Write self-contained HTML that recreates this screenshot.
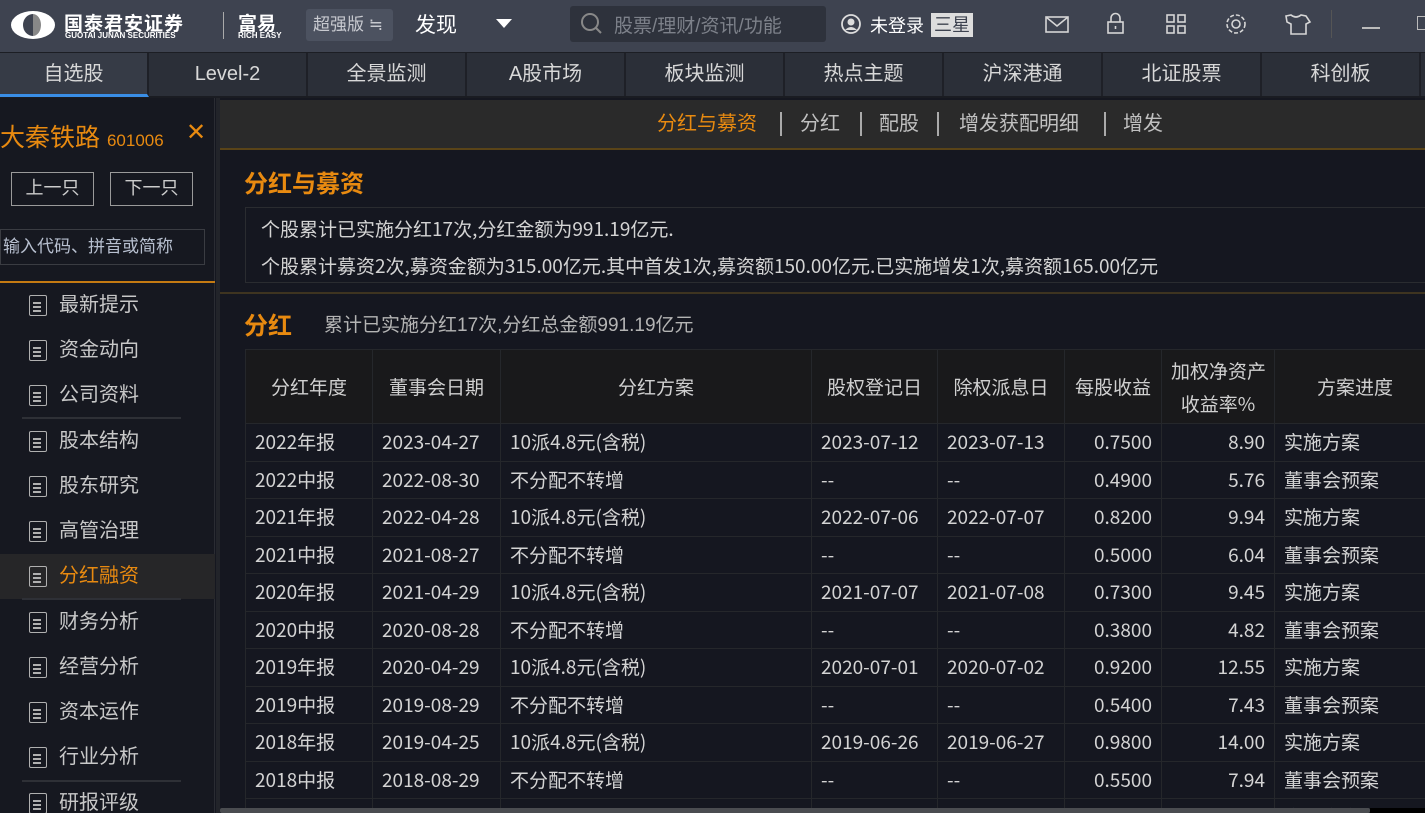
<!DOCTYPE html>
<html><head><meta charset="utf-8"><style>
*{margin:0;padding:0;box-sizing:border-box}
body{width:1425px;height:813px;overflow:hidden;background:#151720;font-family:"Liberation Sans","Noto Sans CJK SC",sans-serif;color:#d2d2d2;position:relative}
.abs{position:absolute}
#top{left:0;top:0;width:1425px;height:52px;background:#3e4350}
#tabs{left:0;top:52px;width:1425px;height:46px;background:#2b2f38;border-top:1px solid #1c1e24;border-bottom:2px solid #1a1c22}
.tab{position:absolute;top:0;height:43px;line-height:43px;text-align:center;font-size:20px;color:#d8d8d8;border-right:2px solid #1e2027}
#left{left:0;top:98px;width:215px;height:715px;background:#161820;border-right:1px solid #2a2c33}
.mi{position:absolute;left:0;width:215px;height:45px;line-height:45px;font-size:20px;color:#c8c8c8;padding-left:59px}
.ic{position:absolute;left:29px;top:12px;width:18px;height:21px;border:1.5px solid #b0b0b0;border-radius:2px}
.ic i{position:absolute;left:3px;height:1.5px;width:8px;background:#b0b0b0}
.sep{position:absolute;left:22px;width:159px;height:2px;background:#2e3036}
table{border-collapse:collapse;position:absolute;left:245px;top:349px;font-size:19px;table-layout:fixed;width:1190px;font-family:"Noto Sans CJK SC","Liberation Sans",sans-serif}
td{border:1px solid #25272b;height:37.5px;line-height:20px;padding:0 9px;white-space:nowrap;color:#d4d4d4;overflow:hidden}
tr.h td{height:74px;background:#19191b;text-align:center;color:#d0d0d0;font-size:19px}
td.r{text-align:right}
</style></head><body>
<div id="top" class="abs">
 <svg class="abs" style="left:10px;top:10px" width="46" height="30"><ellipse cx="23" cy="15" rx="22" ry="14" fill="#fff"/><path d="M23 4 A10 11 0 0 0 23 26 Z" fill="#3e4350"/><path d="M23 4 A8 11 0 0 1 23 26 Z" fill="#888"/></svg>
 <div class="abs" style="left:64px;top:9px;font-size:19px;color:#fff;font-weight:bold;letter-spacing:1px">国泰君安证券</div>
 <div class="abs" style="left:65px;top:31px;font-size:8px;color:#fff;font-weight:bold">GUOTAI JUNAN SECURITIES</div>
 <div class="abs" style="left:223px;top:12px;width:1px;height:27px;background:#aaa"></div>
 <div class="abs" style="left:238px;top:9px;font-size:19px;color:#fff;font-weight:bold">富易</div>
 <div class="abs" style="left:238px;top:31px;font-size:8px;color:#fff;font-weight:bold">RICH EASY</div>
 <div class="abs" style="left:306px;top:9px;width:87px;height:32px;background:#4c5260;border-radius:3px;font-size:17px;line-height:32px;color:#c8cad0;padding-left:7px">超强版 ≒</div>
 <div class="abs" style="left:415px;top:9px;font-size:21px;color:#fff">发现</div>
 <div class="abs" style="left:496px;top:19px;width:0;height:0;border-left:8px solid transparent;border-right:8px solid transparent;border-top:9px solid #fff"></div>
 <div class="abs" style="left:570px;top:6px;width:256px;height:36px;background:#2e323c;border-radius:3px"></div>
 <svg class="abs" style="left:580px;top:12px" width="24" height="24"><circle cx="10" cy="10" r="8" fill="none" stroke="#888" stroke-width="2"/><path d="M16 16 L21 21" stroke="#888" stroke-width="2"/></svg>
 <div class="abs" style="left:614px;top:11px;font-size:19px;color:#7d818a">股票/理财/资讯/功能</div>
 <svg class="abs" style="left:840px;top:13px" width="22" height="22"><circle cx="11" cy="11" r="9" fill="none" stroke="#ddd" stroke-width="1.8"/><circle cx="11" cy="9" r="3.5" fill="#ddd"/><path d="M5 17 Q11 11 17 17" fill="#ddd"/></svg>
 <div class="abs" style="left:870px;top:12px;font-size:18px;color:#fff">未登录</div>
 <div class="abs" style="left:931px;top:13px;width:42px;height:24px;background:#ddd;color:#3e4350;font-size:18px;line-height:24px;text-align:center">三星</div>
 <svg class="abs" style="left:1040px;top:10px" width="280" height="30" fill="none" stroke="#d6d6d6" stroke-width="1.6">
  <rect x="6" y="7" width="22" height="15"/><path d="M6 7 L17 16 L28 7"/>
  <rect x="68" y="12" width="15" height="11"/><path d="M71 12 V8 A4.5 4.5 0 0 1 80 8 V12"/><path d="M75.5 16 V19"/>
  <rect x="127" y="5" width="7" height="7"/><rect x="138" y="5" width="7" height="7"/><rect x="127" y="16" width="7" height="7"/><rect x="138" y="16" width="7" height="7"/>
  <circle cx="196" cy="14" r="4"/><circle cx="196" cy="14" r="9" stroke-dasharray="4 2"/>
  <path d="M246 6 L251 5 Q256 9 261 5 L266 6 L270 12 L266 14 V24 H251 V14 L247 12 Z"/>
 </svg>
 <div class="abs" style="left:1331px;top:10px;width:1px;height:28px;background:#555"></div>
 <div class="abs" style="left:1362px;top:27px;width:18px;height:2px;background:#bbb"></div>
 <div class="abs" style="left:1417px;top:16px;width:10px;height:14px;border:1.5px solid #bbb"></div>
</div>
<div id="tabs" class="abs">
 <div class="tab" style="left:0;width:149px;background:#363b46;border-bottom:3px solid #3a8ee6;height:44px">自选股</div>
 <div class="tab" style="left:149px;width:159px">Level-2</div>
 <div class="tab" style="left:308px;width:159px">全景监测</div>
 <div class="tab" style="left:467px;width:159px">A股市场</div>
 <div class="tab" style="left:626px;width:159px">板块监测</div>
 <div class="tab" style="left:785px;width:159px">热点主题</div>
 <div class="tab" style="left:944px;width:159px">沪深港通</div>
 <div class="tab" style="left:1103px;width:159px">北证股票</div>
 <div class="tab" style="left:1262px;width:159px">科创板</div>
</div>
<div id="left" class="abs">
 <div class="abs" style="left:0;top:20px;font-size:25px;color:#e88a10">大秦铁路 <span style="font-size:17px">601006</span></div>
 <div class="abs" style="left:186px;top:20px;font-size:24px;color:#e88a10">✕</div>
 <div class="abs" style="left:11px;top:74px;width:83px;height:34px;border:1.5px solid #9a9a9a;text-align:center;line-height:31px;font-size:18px;color:#ccc">上一只</div>
 <div class="abs" style="left:110px;top:74px;width:83px;height:34px;border:1.5px solid #9a9a9a;text-align:center;line-height:31px;font-size:18px;color:#ccc">下一只</div>
 <div class="abs" style="left:0;top:131px;width:205px;height:36px;border:1px solid #3a3c42;font-size:17px;line-height:34px;color:#b8c0d0;padding-left:2px">输入代码、拼音或简称</div>
 <div class="abs" style="left:0;top:183px;width:215px;height:2px;background:#c47a12"></div>
</div>
<div class="abs" style="left:0;top:283px;width:215px;height:530px;overflow:hidden">
 <div class="mi" style="top:0px"><div class="ic"><i style="top:6px"></i><i style="top:10px"></i><i style="top:14px"></i></div>最新提示</div>
 <div class="mi" style="top:45px"><div class="ic"><i style="top:6px"></i><i style="top:10px"></i><i style="top:14px"></i></div>资金动向</div>
 <div class="mi" style="top:90px"><div class="ic"><i style="top:6px"></i><i style="top:10px"></i><i style="top:14px"></i></div>公司资料</div>
 <div class="mi" style="top:136px"><div class="ic"><i style="top:6px"></i><i style="top:10px"></i><i style="top:14px"></i></div>股本结构</div>
 <div class="mi" style="top:181px"><div class="ic"><i style="top:6px"></i><i style="top:10px"></i><i style="top:14px"></i></div>股东研究</div>
 <div class="mi" style="top:226px"><div class="ic"><i style="top:6px"></i><i style="top:10px"></i><i style="top:14px"></i></div>高管治理</div>
 <div class="mi" style="top:271px;background:#262628;color:#e88a10"><div class="ic"><i style="top:6px"></i><i style="top:10px"></i><i style="top:14px"></i></div>分红融资</div>
 <div class="mi" style="top:317px"><div class="ic"><i style="top:6px"></i><i style="top:10px"></i><i style="top:14px"></i></div>财务分析</div>
 <div class="mi" style="top:362px"><div class="ic"><i style="top:6px"></i><i style="top:10px"></i><i style="top:14px"></i></div>经营分析</div>
 <div class="mi" style="top:407px"><div class="ic"><i style="top:6px"></i><i style="top:10px"></i><i style="top:14px"></i></div>资本运作</div>
 <div class="mi" style="top:452px"><div class="ic"><i style="top:6px"></i><i style="top:10px"></i><i style="top:14px"></i></div>行业分析</div>
 <div class="mi" style="top:498px"><div class="ic"><i style="top:6px"></i><i style="top:10px"></i><i style="top:14px"></i></div>研报评级</div>
</div>
<div class="sep" style="top:417px"></div>
<div class="sep" style="top:598px"></div>
<div class="sep" style="top:780px"></div>
<div class="abs" style="left:216px;top:98px;width:4px;height:715px;background:#22242a"></div>
<div class="abs" style="left:220px;top:100px;width:1205px;height:50px;background:#2a2a2a;border-bottom:2px solid #5a4418;font-size:20px;line-height:48px;color:#c0c0c0">
 <span class="abs" style="left:437px;color:#e88a10">分红与募资</span>
 <span class="abs" style="left:560px;top:12px;width:2px;height:24px;background:#aaa"></span>
 <span class="abs" style="left:580px">分红</span>
 <span class="abs" style="left:640px;top:12px;width:2px;height:24px;background:#aaa"></span>
 <span class="abs" style="left:659px">配股</span>
 <span class="abs" style="left:717px;top:12px;width:2px;height:24px;background:#aaa"></span>
 <span class="abs" style="left:739px">增发获配明细</span>
 <span class="abs" style="left:884px;top:12px;width:2px;height:24px;background:#aaa"></span>
 <span class="abs" style="left:903px">增发</span>
</div>
<div class="abs" style="left:244px;top:164px;font-size:24px;font-weight:bold;color:#e88a10">分红与募资</div>
<div class="abs" style="left:245px;top:207px;width:1190px;height:76px;border:1px solid #2a2c30;font-size:19px;color:#d4d4d4;padding:2px 15px;line-height:37px;font-family:'Noto Sans CJK SC',sans-serif">个股累计已实施分红17次,分红金额为991.19亿元.<br>个股累计募资2次,募资金额为315.00亿元.其中首发1次,募资额150.00亿元.已实施增发1次,募资额165.00亿元</div>
<div class="abs" style="left:220px;top:292px;width:1205px;height:2px;background:#3e3420"></div>
<div class="abs" style="left:244px;top:306px;font-size:24px;font-weight:bold;color:#e88a10">分红</div>
<div class="abs" style="left:324px;top:310px;font-size:19px;color:#b4b4b4">累计已实施分红17次,分红总金额991.19亿元</div>
<div class="abs" style="left:220px;top:349px;width:1205px;height:459px;overflow:hidden">
<table style="left:25px;top:0">
<colgroup><col style="width:127px"><col style="width:128px"><col style="width:311px"><col style="width:126px"><col style="width:127px"><col style="width:97px"><col style="width:113px"><col style="width:161px"></colgroup>
<tr class="h"><td>分红年度</td><td>董事会日期</td><td>分红方案</td><td>股权登记日</td><td>除权派息日</td><td>每股收益</td><td style="line-height:33px">加权净资产<br>收益率%</td><td>方案进度</td></tr>
<tr><td>2022年报</td><td>2023-04-27</td><td>10派4.8元(含税)</td><td>2023-07-12</td><td>2023-07-13</td><td class="r">0.7500</td><td class="r">8.90</td><td>实施方案</td></tr>
<tr><td>2022中报</td><td>2022-08-30</td><td>不分配不转增</td><td>--</td><td>--</td><td class="r">0.4900</td><td class="r">5.76</td><td>董事会预案</td></tr>
<tr><td>2021年报</td><td>2022-04-28</td><td>10派4.8元(含税)</td><td>2022-07-06</td><td>2022-07-07</td><td class="r">0.8200</td><td class="r">9.94</td><td>实施方案</td></tr>
<tr><td>2021中报</td><td>2021-08-27</td><td>不分配不转增</td><td>--</td><td>--</td><td class="r">0.5000</td><td class="r">6.04</td><td>董事会预案</td></tr>
<tr><td>2020年报</td><td>2021-04-29</td><td>10派4.8元(含税)</td><td>2021-07-07</td><td>2021-07-08</td><td class="r">0.7300</td><td class="r">9.45</td><td>实施方案</td></tr>
<tr><td>2020中报</td><td>2020-08-28</td><td>不分配不转增</td><td>--</td><td>--</td><td class="r">0.3800</td><td class="r">4.82</td><td>董事会预案</td></tr>
<tr><td>2019年报</td><td>2020-04-29</td><td>10派4.8元(含税)</td><td>2020-07-01</td><td>2020-07-02</td><td class="r">0.9200</td><td class="r">12.55</td><td>实施方案</td></tr>
<tr><td>2019中报</td><td>2019-08-29</td><td>不分配不转增</td><td>--</td><td>--</td><td class="r">0.5400</td><td class="r">7.43</td><td>董事会预案</td></tr>
<tr><td>2018年报</td><td>2019-04-25</td><td>10派4.8元(含税)</td><td>2019-06-26</td><td>2019-06-27</td><td class="r">0.9800</td><td class="r">14.00</td><td>实施方案</td></tr>
<tr><td>2018中报</td><td>2018-08-29</td><td>不分配不转增</td><td>--</td><td>--</td><td class="r">0.5500</td><td class="r">7.94</td><td>董事会预案</td></tr>
<tr><td>2017年报</td><td>2018-04-26</td><td>10派4.8元(含税)</td><td>2018-07-05</td><td>2018-07-06</td><td class="r">0.9000</td><td class="r">13.00</td><td>实施方案</td></tr>
</table>
</div>
<div class="abs" style="left:220px;top:808px;width:1150px;height:5px;background:#4a4c50;border-radius:2px"></div>
<div class="abs" style="left:1370px;top:808px;width:55px;height:5px;background:#000"></div>
</body></html>
